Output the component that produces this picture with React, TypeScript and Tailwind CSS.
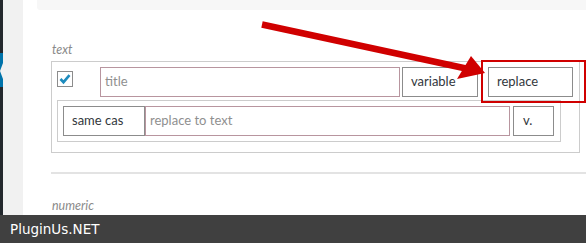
import React from "react";

const font = { fontFamily: 'Lato, "Open Sans", "Liberation Sans", sans-serif' };

export default function App() {
  return (
    <div className="relative w-[586px] h-[243px] overflow-hidden flex flex-col bg-white" style={font}>
      <div className="flex flex-1 min-h-0">
        {/* admin menu sliver */}
        <div className="w-[3px] bg-[#23282d] flex flex-col">
          <div className="h-[53px]" />
          <div className="h-[34px] bg-[#0073aa] relative">
            <svg className="absolute left-0 top-[10px]" width="3" height="16" viewBox="0 0 3 16">
              <polygon points="3,0 0,8 3,16" fill="#f1f1f1" />
            </svg>
          </div>
        </div>
        <div className="w-[20px] bg-[#f1f1f1]" />
        {/* main content */}
        <div className="flex-1 flex flex-col bg-white">
          <div className="ml-[14px] h-[10px] bg-[#f7f7f7] rounded-bl-[3px]" />
          <div className="mt-[32px] ml-[29px] h-[16px] text-[12.5px] leading-[16px] italic text-[#8a8a8a]">text</div>
          <div className="mt-[3px] ml-[28px] w-[529px] border border-[#cccccc] pt-[5px] pl-[5px] pb-[10px]">
            <div className="flex items-start h-[30px]">
              <div className="w-[43px] pt-[4px]">
                <div className="w-[16px] h-[16px] border border-[#8c8c8c] bg-white flex items-center justify-center">
                  <svg width="14" height="14" viewBox="0 0 14 14">
                    <path d="M2.5 7 L5.5 10.2 L11.5 3.2" fill="none" stroke="#1e8cbe" strokeWidth="2.6" />
                  </svg>
                </div>
              </div>
              <div className="w-[300px] h-[30px] border border-[#b8959f] pl-[4px] flex items-center text-[13px] text-[#8f8f8f]">title</div>
              <div className="ml-[2px] w-[76px] h-[30px] border border-[#8c8c8c] pl-[8px] flex items-center text-[13px] text-[#32373c]">variable</div>
              <div className="ml-[10px] w-[85px] h-[30px] border border-[#8c8c8c] pl-[8px] flex items-center text-[13px] text-[#32373c]">replace</div>
            </div>
            <div className="mt-[3px] w-[504px] border border-[#cccccc] pt-[5px] pl-[5px] pb-[5px]">
              <div className="flex h-[30px]">
                <div className="w-[82px] h-[30px] border border-[#8c8c8c] pl-[8px] flex items-center text-[13px] text-[#32373c] overflow-hidden whitespace-nowrap">same cas</div>
                <div className="w-[365px] h-[30px] border border-[#b8959f] pl-[4px] flex items-center text-[13px] text-[#8f8f8f]">replace to text</div>
                <div className="ml-[3px] w-[41px] h-[30px] border border-[#8c8c8c] pl-[9px] flex items-center text-[13px] text-[#32373c] overflow-hidden whitespace-nowrap">v.</div>
              </div>
            </div>
          </div>
          <div className="mt-[19px] ml-[28px] h-[2px] bg-[#e3e3e3]" />
          <div className="mt-[24px] ml-[29px] h-[16px] text-[12.5px] leading-[16px] italic text-[#8a8a8a]">numeric</div>
        </div>
      </div>
      <div className="h-[28px] bg-[#404040] flex items-center pl-[10px] text-white text-[13.5px]" style={{ fontFamily: '"DejaVu Sans", sans-serif' }}>
        PluginUs.NET
      </div>

      {/* annotation overlay */}
      <div className="absolute left-[481px] top-[60px] w-[105px] h-[43px] border-2 border-[#d00000]" />
      <svg className="absolute left-0 top-0 pointer-events-none" width="586" height="243" viewBox="0 0 586 243">
        <line x1="262" y1="24.5" x2="466" y2="68.5" stroke="#d00000" strokeWidth="6.5" />
        <polygon points="485,73 471,56 457,79" fill="#d00000" />
      </svg>
    </div>
  );
}
